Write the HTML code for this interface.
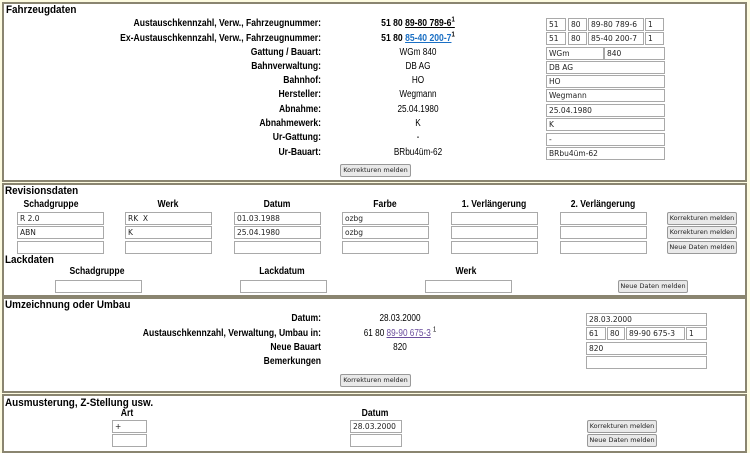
<!DOCTYPE html>
<html><head><meta charset="utf-8"><style>
body{margin:0;width:750px;height:453px;background:#fdfbe0;font-family:"Liberation Sans",sans-serif;position:relative;overflow:hidden}
.box{position:absolute;left:2px;width:741px;background:#fff;border:2px solid #8a8570}
.a{position:absolute;white-space:nowrap;font-size:10px;line-height:12px;transform:scaleX(0.82)}
.b{font-weight:bold;transform:scaleX(0.86)}
.h{position:absolute;left:4px;font-weight:bold;font-size:11px;white-space:nowrap;transform:scaleX(0.9);transform-origin:left center}
.r{text-align:right;transform-origin:right center}
.c{text-align:center;transform-origin:center center}
.i{position:absolute;height:11px;border:1px solid #a9a9a9;background:#fff;font-family:"DejaVu Sans",sans-serif;font-size:7.5px;line-height:11px;padding-left:2px;box-sizing:content-box;color:#222;white-space:nowrap;overflow:hidden}
.btn{position:absolute;height:11px;border:1px solid #999;border-radius:2px;background:#e9e9e9;font-family:"DejaVu Sans",sans-serif;font-size:6.5px;line-height:11px;text-align:center;color:#222;white-space:nowrap;overflow:hidden}
sup{font-size:7px;line-height:0}
a.k{color:#000;text-decoration:underline}
a.bl{color:#1a6fc4;text-decoration:underline}
a.p{color:#6a4c9c;text-decoration:underline}
</style></head><body>

<div class="box" style="top:2px;height:176px"></div>
<div class="box" style="top:183px;height:110px"></div>
<div class="box" style="top:297px;height:92px"></div>
<div class="box" style="top:394px;height:55px"></div>

<!-- Box 1 -->
<div class="h" style="left:6px;top:4px">Fahrzeugdaten</div>
<div class="a b r" style="left:0;width:321px;top:18px">Austauschkennzahl, Verw., Fahrzeugnummer:</div>
<div class="a b r" style="left:0;width:321px;top:33px">Ex-Austauschkennzahl, Verw., Fahrzeugnummer:</div>
<div class="a b r" style="left:0;width:321px;top:47px">Gattung / Bauart:</div>
<div class="a b r" style="left:0;width:321px;top:61px">Bahnverwaltung:</div>
<div class="a b r" style="left:0;width:321px;top:75px">Bahnhof:</div>
<div class="a b r" style="left:0;width:321px;top:89px">Hersteller:</div>
<div class="a b r" style="left:0;width:321px;top:104px">Abnahme:</div>
<div class="a b r" style="left:0;width:321px;top:118px">Abnahmewerk:</div>
<div class="a b r" style="left:0;width:321px;top:132px">Ur-Gattung:</div>
<div class="a b r" style="left:0;width:321px;top:147px">Ur-Bauart:</div>

<div class="a b c" style="left:338px;width:160px;top:18px">51 80 <a class="k">89-80 789-6<sup>1</sup></a></div>
<div class="a b c" style="left:338px;width:160px;top:33px">51 80 <a class="bl">85-40 200-7</a><sup>1</sup></div>
<div class="a c" style="left:338px;width:160px;top:47px">WGm 840</div>
<div class="a c" style="left:338px;width:160px;top:61px">DB AG</div>
<div class="a c" style="left:338px;width:160px;top:75px">HO</div>
<div class="a c" style="left:338px;width:160px;top:89px">Wegmann</div>
<div class="a c" style="left:338px;width:160px;top:104px">25.04.1980</div>
<div class="a c" style="left:338px;width:160px;top:118px">K</div>
<div class="a c" style="left:338px;width:160px;top:132px">-</div>
<div class="a c" style="left:338px;width:160px;top:147px">BRbu4üm-62</div>

<div class="i" style="left:546px;top:18px;width:16px">51</div>
<div class="i" style="left:568px;top:18px;width:15px">80</div>
<div class="i" style="left:588px;top:18px;width:52px">89-80 789-6</div>
<div class="i" style="left:645px;top:18px;width:15px">1</div>
<div class="i" style="left:546px;top:32px;width:16px">51</div>
<div class="i" style="left:568px;top:32px;width:15px">80</div>
<div class="i" style="left:588px;top:32px;width:52px">85-40 200-7</div>
<div class="i" style="left:645px;top:32px;width:15px">1</div>
<div class="i" style="left:546px;top:47px;width:54px">WGm</div>
<div class="i" style="left:604px;top:47px;width:57px">840</div>
<div class="i" style="left:546px;top:61px;width:115px">DB AG</div>
<div class="i" style="left:546px;top:75px;width:115px">HO</div>
<div class="i" style="left:546px;top:89px;width:115px">Wegmann</div>
<div class="i" style="left:546px;top:104px;width:115px">25.04.1980</div>
<div class="i" style="left:546px;top:118px;width:115px">K</div>
<div class="i" style="left:546px;top:133px;width:115px">-</div>
<div class="i" style="left:546px;top:147px;width:115px">BRbu4üm-62</div>
<div class="btn" style="left:340px;top:164px;width:69px">Korrekturen melden</div>

<!-- Box 2 -->
<div class="h" style="left:5px;top:185px">Revisionsdaten</div>
<div class="a b c" style="left:11px;width:80px;top:199px">Schadgruppe</div>
<div class="a b c" style="left:128px;width:80px;top:199px">Werk</div>
<div class="a b c" style="left:237px;width:80px;top:199px">Datum</div>
<div class="a b c" style="left:345px;width:80px;top:199px">Farbe</div>
<div class="a b c" style="left:444px;width:100px;top:199px">1. Verlängerung</div>
<div class="a b c" style="left:553px;width:100px;top:199px">2. Verlängerung</div>

<div class="i" style="left:17px;top:212px;width:83px">R 2.0</div>
<div class="i" style="left:125px;top:212px;width:83px">RK&nbsp; X</div>
<div class="i" style="left:234px;top:212px;width:83px">01.03.1988</div>
<div class="i" style="left:342px;top:212px;width:83px">ozbg</div>
<div class="i" style="left:451px;top:212px;width:83px"></div>
<div class="i" style="left:560px;top:212px;width:83px"></div>
<div class="btn" style="left:667px;top:212px;width:68px">Korrekturen melden</div>

<div class="i" style="left:17px;top:226px;width:83px">ABN</div>
<div class="i" style="left:125px;top:226px;width:83px">K</div>
<div class="i" style="left:234px;top:226px;width:83px">25.04.1980</div>
<div class="i" style="left:342px;top:226px;width:83px">ozbg</div>
<div class="i" style="left:451px;top:226px;width:83px"></div>
<div class="i" style="left:560px;top:226px;width:83px"></div>
<div class="btn" style="left:667px;top:226px;width:68px">Korrekturen melden</div>

<div class="i" style="left:17px;top:241px;width:83px"></div>
<div class="i" style="left:125px;top:241px;width:83px"></div>
<div class="i" style="left:234px;top:241px;width:83px"></div>
<div class="i" style="left:342px;top:241px;width:83px"></div>
<div class="i" style="left:451px;top:241px;width:83px"></div>
<div class="i" style="left:560px;top:241px;width:83px"></div>
<div class="btn" style="left:667px;top:241px;width:68px">Neue Daten melden</div>

<div class="h" style="left:5px;top:254px">Lackdaten</div>
<div class="a b c" style="left:47px;width:100px;top:266px">Schadgruppe</div>
<div class="a b c" style="left:232px;width:100px;top:266px">Lackdatum</div>
<div class="a b c" style="left:416px;width:100px;top:266px">Werk</div>
<div class="i" style="left:55px;top:280px;width:83px"></div>
<div class="i" style="left:240px;top:280px;width:83px"></div>
<div class="i" style="left:425px;top:280px;width:83px"></div>
<div class="btn" style="left:618px;top:280px;width:68px">Neue Daten melden</div>

<!-- Box 3 -->
<div class="h" style="left:5px;top:299px">Umzeichnung oder Umbau</div>
<div class="a b r" style="left:0;width:321px;top:313px">Datum:</div>
<div class="a b r" style="left:0;width:321px;top:328px">Austauschkennzahl, Verwaltung, Umbau in:</div>
<div class="a b r" style="left:0;width:321px;top:342px">Neue Bauart</div>
<div class="a b r" style="left:0;width:321px;top:356px">Bemerkungen</div>
<div class="a c" style="left:345px;width:110px;top:313px">28.03.2000</div>
<div class="a c" style="left:345px;width:110px;top:328px">61 80 <a class="p">89-90 675-3</a> <sup>1</sup></div>
<div class="a c" style="left:345px;width:110px;top:342px">820</div>
<div class="i" style="left:586px;top:313px;width:117px">28.03.2000</div>
<div class="i" style="left:586px;top:327px;width:16px">61</div>
<div class="i" style="left:607px;top:327px;width:14px">80</div>
<div class="i" style="left:626px;top:327px;width:55px">89-90 675-3</div>
<div class="i" style="left:686px;top:327px;width:17px">1</div>
<div class="i" style="left:586px;top:342px;width:117px">820</div>
<div class="i" style="left:586px;top:356px;width:117px"></div>
<div class="btn" style="left:340px;top:374px;width:69px">Korrekturen melden</div>

<!-- Box 4 -->
<div class="h" style="left:5px;top:397px">Ausmusterung, Z-Stellung usw.</div>
<div class="a b c" style="left:107px;width:40px;top:408px">Art</div>
<div class="a b c" style="left:345px;width:60px;top:408px">Datum</div>
<div class="i" style="left:112px;top:420px;width:31px">+</div>
<div class="i" style="left:350px;top:420px;width:48px">28.03.2000</div>
<div class="btn" style="left:587px;top:420px;width:68px">Korrekturen melden</div>
<div class="i" style="left:112px;top:434px;width:31px"></div>
<div class="i" style="left:350px;top:434px;width:48px"></div>
<div class="btn" style="left:587px;top:434px;width:68px">Neue Daten melden</div>
</body></html>
